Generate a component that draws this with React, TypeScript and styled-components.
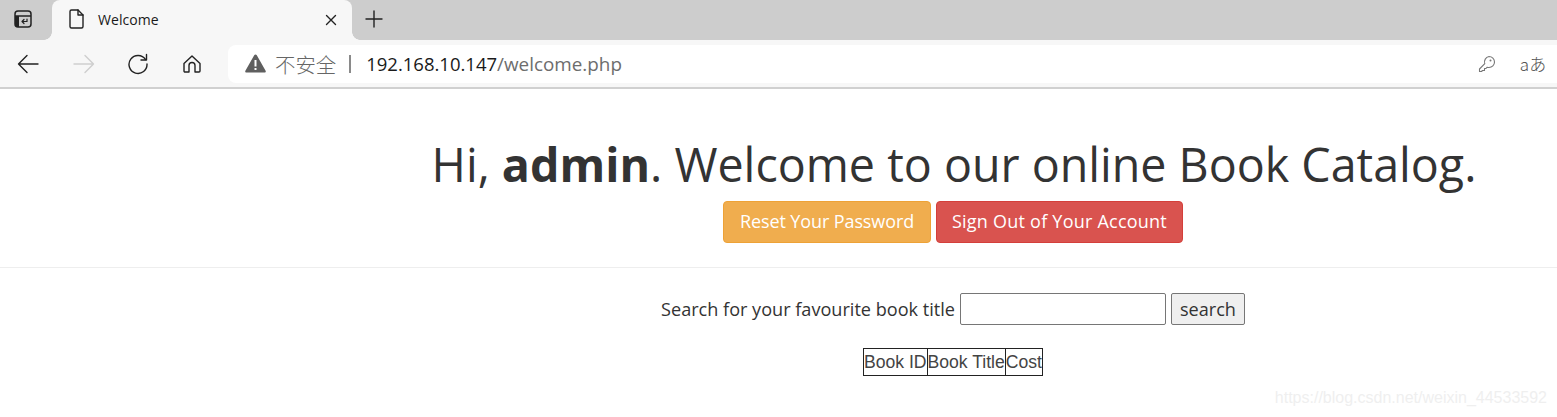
import React from "react";
import styled, { createGlobalStyle } from "styled-components";

const Global = createGlobalStyle`
  html, body { margin: 0; padding: 0; background: #fff; }
  body { width: 1557px; height: 417px; overflow: hidden; font-family: "Open Sans", "Noto Sans", sans-serif; color: #333; position: relative; }
`;

const Chrome = styled.header`
  display: flex;
  flex-direction: column;
  border-bottom: 2px solid #d0d0d0;
`;
const TabStrip = styled.div`
  height: 40px;
  background: #cdcdcd;
  display: flex;
  align-items: stretch;
`;
const StripButton = styled.div<{ $w: number }>`
  width: ${(p) => p.$w}px;
  display: flex;
  align-items: center;
  justify-content: center;
  flex: none;
`;
const Tab = styled.div`
  position: relative;
  width: 300px;
  background: #f7f7f7;
  border-radius: 8px 8px 0 0;
  display: flex;
  align-items: center;
  padding: 0 12px 0 16px;
  box-sizing: border-box;
  flex: none;
  &::before, &::after {
    content: "";
    position: absolute;
    bottom: 0;
    width: 8px;
    height: 8px;
  }
  &::before {
    left: -8px;
    background: radial-gradient(circle at 0 0, transparent 7.5px, #f7f7f7 8px);
  }
  &::after {
    right: -8px;
    background: radial-gradient(circle at 100% 0, transparent 7.5px, #f7f7f7 8px);
  }
`;
const TabTitle = styled.span`
  font: 14px "Open Sans", sans-serif;
  letter-spacing: 0.05px;
  color: #1a1a1a;
  margin-left: 12px;
  margin-bottom: 2px;
  flex: 1;
`;
const Toolbar = styled.div`
  height: 47px;
  background: #f7f7f7;
  display: flex;
  align-items: center;
`;
const NavButton = styled.div<{ $w: number }>`
  width: ${(p) => p.$w}px;
  height: 38px;
  display: flex;
  align-items: center;
  justify-content: center;
  flex: none;
`;
const Omnibox = styled.div`
  flex: 1;
  height: 38px;
  background: #fff;
  border-radius: 8px 0 0 8px;
  margin-left: 10px;
  display: flex;
  align-items: center;
  padding-left: 17px;
  font: 18.5px "Open Sans", "Noto Sans CJK SC", sans-serif;
`;
const Insecure = styled.span`
  color: #666;
  margin-left: 9px;
  font-size: 20.4px;
  font-family: "Noto Sans CJK SC", sans-serif;
  font-weight: 300;
`;
const Sep = styled.span`
  width: 2px;
  height: 18px;
  background: #8a8a8a;
  margin: 0 15px 0 13px;
`;
const Host = styled.span`
  color: #1a1a1a;
`;
const UrlPath = styled.span`
  color: #6d6d6d;
  font-size: 18.85px;
  flex: 1;
`;
const EndIcon = styled.div<{ $w: number }>`
  width: ${(p) => p.$w}px;
  display: flex;
  align-items: center;
  justify-content: center;
  flex: none;
`;
const TranslateLabel = styled.span`
  font: 300 17px "Noto Sans CJK JP", sans-serif;
  color: #555;
  margin-left: 12px;
`;

const Page = styled.main`
  padding-left: 349px;
  text-align: center;
`;
const PageHeader = styled.div`
  padding-top: 43px;
  padding-bottom: 24px;
`;
const Title = styled.h1`
  margin: 0;
  font: 400 46.6px/65px "Open Sans", sans-serif;
  color: #333;
  white-space: nowrap;
  padding-left: 2px;
  b { font-weight: 700; }
`;
const Actions = styled.div`
  display: flex;
  justify-content: center;
  gap: 5px;
  margin-top: 4px;
`;
const ActionButton = styled.a<{ $bg: string; $bd: string; $w: number; $ls: number }>`
  display: flex;
  align-items: center;
  justify-content: center;
  width: ${(p) => p.$w}px;
  height: 42px;
  padding-bottom: 2px;
  box-sizing: border-box;
  background: ${(p) => p.$bg};
  border: 1px solid ${(p) => p.$bd};
  border-radius: 4px;
  color: #fff;
  font: 18px "Open Sans", sans-serif;
  letter-spacing: ${(p) => p.$ls}px;
`;
const Rule = styled.hr`
  margin: 0 0 0 -349px;
  border: 0;
  border-top: 1px solid #eee;
`;
const SearchForm = styled.form`
  display: flex;
  justify-content: center;
  align-items: center;
  gap: 5px;
  margin-top: 25px;
  font: 18.1px "Open Sans", sans-serif;
  color: #333;
`;
const SearchInput = styled.input`
  width: 206px;
  height: 32px;
  box-sizing: border-box;
  border: 1px solid #767676;
  border-radius: 2px;
  background: #fff;
  padding: 0;
`;
const SearchButton = styled.button`
  width: 74px;
  height: 32px;
  box-sizing: border-box;
  border: 1px solid #767676;
  border-radius: 2px;
  background: #efefef;
  color: #333;
  font: 18.1px "Open Sans", sans-serif;
  padding: 0;
`;
const Table = styled.table`
  margin: 23px auto 0;
  border-collapse: collapse;
  border: 1px solid #222;
  font: 17.6px/26px "Liberation Sans", sans-serif;
  color: #444;
  th {
    border: 1px solid #222;
    padding: 0;
    font-weight: 400;
    white-space: nowrap;
  }
`;
const Watermark = styled.div`
  position: absolute;
  right: 10px;
  top: 389px;
  font: 16px "Liberation Sans", sans-serif;
  color: #efefef;
`;

const S = { fill: "none", stroke: "#222", strokeWidth: 1.4, strokeLinecap: "round", strokeLinejoin: "round" } as const;

export default function App() {
  return (
    <>
      <Global />
      <Chrome>
        <TabStrip>
          <StripButton $w={52}>
            <svg width="20" height="20" viewBox="0 0 20 20" style={{ marginLeft: -6, marginTop: -2 }}>
              <rect x="2" y="2" width="16" height="16" rx="3" fill="#cdcdcd" stroke="#222" strokeWidth="1.5" />
              <path d="M2 7h16" stroke="#222" strokeWidth="1.5" />
              <path d="M2 7h4v11H5a3 3 0 0 1-3-3z" fill="#222" />
              <path d="M14 10v2.500H9M11 10.500l-2 2 2 2" {...S} strokeWidth="1.2" />
            </svg>
          </StripButton>
          <Tab>
            <svg width="18" height="22" viewBox="0 0 18 22" style={{ marginTop: -2 }}>
              <path d="M3.500 2h6.500l5 5v11.500a1.500 1.500 0 0 1-1.500 1.500h-10a1.500 1.500 0 0 1-1.500-1.500v-15a1.500 1.500 0 0 1 1.500-1.500z" {...S} />
              <path d="M10 2v5h5" {...S} />
            </svg>
            <TabTitle>Welcome</TabTitle>
            <svg width="12" height="12" viewBox="0 0 12 12" style={{ marginRight: 3 }}>
              <path d="M1.500 1.500l9 9M10.500 1.500l-9 9" {...S} />
            </svg>
          </Tab>
          <StripButton $w={44}>
            <svg width="18" height="18" viewBox="0 0 18 18" style={{ marginTop: -2 }}>
              <path d="M9 1v16M1 9h16" {...S} />
            </svg>
          </StripButton>
        </TabStrip>
        <Toolbar>
          <NavButton $w={56}>
            <svg width="22" height="20" viewBox="0 0 22 20">
              <path d="M1.500 10h19.500M10 1.500L1.500 10l8.500 8.500" {...S} />
            </svg>
          </NavButton>
          <NavButton $w={55}>
            <svg width="22" height="20" viewBox="0 0 22 20">
              <path d="M1 10h19.500M12 1.500l8.500 8.500-8.500 8.500" {...S} stroke="#cfcfcf" />
            </svg>
          </NavButton>
          <NavButton $w={54}>
            <svg width="22" height="22" viewBox="0 0 22 22">
              <path d="M18.500 6.500A9 9 0 1 0 20 11" {...S} />
              <path d="M19.500 1.500v5.500h-5.500" {...S} />
            </svg>
          </NavButton>
          <NavButton $w={53}>
            <svg width="20" height="20" viewBox="0 0 20 20">
              <path d="M2 9.500L10 2l8 7.500V17a1 1 0 0 1-1 1h-4v-6.500a3 3 0 0 0-6 0V18H3a1 1 0 0 1-1-1z" {...S} />
            </svg>
          </NavButton>
          <Omnibox>
            <svg width="21" height="19" viewBox="0 0 21 19">
              <path d="M10.500 0.500c.6 0 1 .3 1.300.8l8.800 15.500c.5 1 0 1.700-1 1.700H1.400c-1 0-1.500-.7-1-1.700L9.200 1.300c.3-.5.700-.8 1.300-.8z" fill="#5f5f5f" />
              <path d="M9.500 6h2v6.500h-2zM9.500 14h2v2h-2z" fill="#fff" />
            </svg>
            <Insecure>不安全</Insecure>
            <Sep />
            <Host>192.168.10.147</Host>
            <UrlPath>/welcome.php</UrlPath>
            <EndIcon $w={18}>
              <svg width="18" height="18" viewBox="0 0 18 18" style={{ marginLeft: -2 }}>
                <path d="M11 1.500a5.500 5.500 0 0 1 0 11c-.7 0-1.300-.1-1.800-.3L8 13.500H6.500v2H4.500l-1 1H1.500v-2.500l5.300-5.300A5.500 5.500 0 0 1 11 1.500z" fill="none" stroke="#777" strokeWidth="1.100" strokeLinejoin="round" />
                <circle cx="12.500" cy="5.500" r="1" fill="#777" />
              </svg>
            </EndIcon>
            <EndIcon $w={60}>
              <TranslateLabel>aあ</TranslateLabel>
            </EndIcon>
          </Omnibox>
        </Toolbar>
      </Chrome>
      <Page>
        <PageHeader>
          <Title>
            Hi, <b>admin</b>. Welcome to our online Book Catalog.
          </Title>
          <Actions>
            <ActionButton $bg="#f0ad4e" $bd="#eea236" $w={208} $ls={-0.1}>Reset Your Password</ActionButton>
            <ActionButton $bg="#d9534f" $bd="#d43f3a" $w={247} $ls={0.23}>Sign Out of Your Account</ActionButton>
          </Actions>
        </PageHeader>
        <Rule />
        <SearchForm>
          <span>Search for your favourite book title</span>
          <SearchInput />
          <SearchButton type="button">search</SearchButton>
        </SearchForm>
        <Table>
          <thead>
            <tr>
              <th>Book ID</th>
              <th>Book Title</th>
              <th>Cost</th>
            </tr>
          </thead>
        </Table>
      </Page>
      <Watermark>https://blog.csdn.net/weixin_44533592</Watermark>
    </>
  );
}
